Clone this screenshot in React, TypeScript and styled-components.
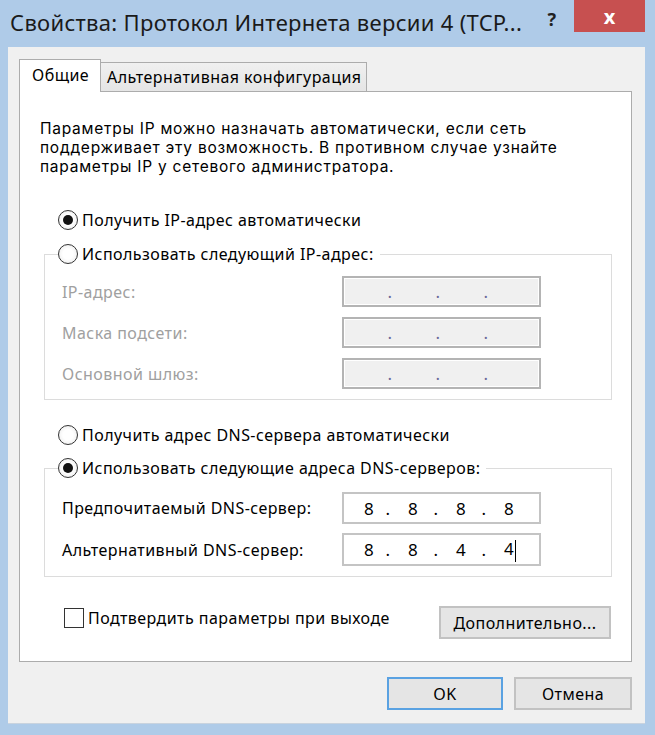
import styled, { createGlobalStyle, css } from 'styled-components';

const GlobalStyle = createGlobalStyle`
  body {
    margin: 0;
    font-family: 'Noto Sans', 'Liberation Sans', sans-serif;
    letter-spacing: 0.45px;
    color: #000;
  }
`;

const Window = styled.div`
  width: 655px;
  height: 735px;
  background: #afcbe8;
  display: flex;
  flex-direction: column;
  box-sizing: border-box;
`;

const TitleBar = styled.div`
  height: 47px;
  display: flex;
  align-items: flex-start;
  flex-shrink: 0;
`;

const Title = styled.div`
  flex: 1;
  padding: 9px 0 0 10px;
  font-size: 22px;
  line-height: 26px;
  letter-spacing: 0.3px;
  color: #1a1a1a;
  white-space: nowrap;
`;

const HelpButton = styled.div`
  width: 24px;
  margin-top: 9px;
  margin-right: 10px;
  font-size: 18px;
  font-weight: 700;
  line-height: 20px;
  color: #222;
  text-align: center;
`;

const CloseButton = styled.div`
  width: 71px;
  height: 32px;
  margin-right: 10px;
  background: #c75050;
  color: #fff;
  display: flex;
  align-items: center;
  justify-content: center;
  font-size: 20px;
  font-weight: 700;
  letter-spacing: 0;
`;

const Client = styled.div`
  flex: 1;
  margin: 0 10px 11px 8px;
  background: #f0f0f0;
  padding: 12px 13px 0 11px;
  display: flex;
  flex-direction: column;
  box-sizing: border-box;
  border-bottom: 1px solid #c9d3de;
`;

const Tabs = styled.div`
  display: flex;
  align-items: flex-end;
  height: 33px;
  margin-bottom: -1px;
  position: relative;
  z-index: 1;
`;

const Tab = styled.div<{ $active?: boolean }>`
  box-sizing: border-box;
  border: 1px solid #acacac;
  border-bottom: none;
  font-size: 16px;
  display: flex;
  align-items: center;
  ${({ $active }) =>
    $active
      ? css`
          height: 33px;
          background: #fff;
          padding: 0 11px 2px 12px;
        `
      : css`
          height: 29px;
          margin-bottom: 1px;
          margin-left: -1px;
          padding: 0 5px 0 6px;
          background: linear-gradient(#f0f0f0, #e5e5e5);
        `}
`;

const Panel = styled.div`
  height: 571px;
  box-sizing: border-box;
  background: #fff;
  border: 1px solid #acacac;
  padding: 27px 19px 0 20px;
  display: flex;
  flex-direction: column;
`;

const Intro = styled.div`
  display: flex;
  flex-direction: column;
  font-family: Inter, 'Noto Sans', sans-serif;
  font-size: 15.5px;
  letter-spacing: 0.75px;
`;

const IntroLine = styled.div`
  height: 19px;
  line-height: 19px;
  white-space: nowrap;
`;

const RadioRow = styled.label<{ $mt: number; $ml?: number }>`
  display: flex;
  align-items: center;
  gap: 4px;
  height: 20px;
  margin: ${({ $mt }) => $mt}px 0 0 ${({ $ml }) => $ml ?? 18}px;
  font-size: 16px;
`;

const Radio = styled.span<{ $checked?: boolean }>`
  width: 20px;
  height: 20px;
  box-sizing: border-box;
  border: 1.5px solid #333;
  border-radius: 50%;
  background: radial-gradient(circle, #fff 40%, #e6e6e6 100%);
  display: flex;
  align-items: center;
  justify-content: center;
  flex-shrink: 0;

  &::after {
    content: '';
    width: 10px;
    height: 10px;
    border-radius: 50%;
    background: #111;
    display: ${({ $checked }) => ($checked ? 'block' : 'none')};
  }
`;

const GroupBox = styled.fieldset<{ $mt: number }>`
  margin: ${({ $mt }) => $mt}px 0 0 4px;
  padding: 0;
  border: 1px solid #dcdcdc;
  min-width: 0;
`;

const Legend = styled.legend`
  margin-left: 13px;
  padding: 0 6px 0 0;
`;

const Fields = styled.div<{ $pt: number; $gap: number }>`
  display: flex;
  flex-direction: column;
  gap: ${({ $gap }) => $gap}px;
  padding: ${({ $pt }) => $pt}px 70px 10px 17px;
`;

const FieldRow = styled.div`
  display: flex;
  align-items: center;
  justify-content: space-between;
`;

const FieldLabel = styled.span<{ $disabled?: boolean }>`
  font-size: 16px;
  color: ${({ $disabled }) => ($disabled ? '#a0a0a0' : '#000')};
`;

const IpBox = styled.div<{ $disabled?: boolean; $h: number }>`
  width: 199px;
  height: ${({ $h }) => $h}px;
  box-sizing: border-box;
  border: 2px solid ${({ $disabled }) => ($disabled ? '#b4b4b4' : '#c4c4c4')};
  background: ${({ $disabled }) => ($disabled ? '#f0f0f0' : '#fff')};
  box-shadow: inset 0 0 0 1px #fff;
  display: grid;
  grid-template-columns: 44px 48px 48px 48px;
  align-items: center;
  padding-left: 4px;
  font-size: 17px;
  letter-spacing: 0;
`;

const Octet = styled.span<{ $disabled?: boolean }>`
  display: flex;
  align-items: center;
  justify-content: space-between;
  padding-left: 16px;
  padding-right: ${({ $disabled }) => ($disabled ? 0 : 2)}px;
`;

const Dot = styled.span<{ $disabled?: boolean }>`
  color: ${({ $disabled }) => ($disabled ? '#6a6a9a' : '#000')};
`;

const Caret = styled.span`
  display: inline-block;
  width: 1px;
  height: 22px;
  background: #000;
  margin-left: 1px;
  vertical-align: middle;
`;

const BottomRow = styled.div`
  display: flex;
  justify-content: space-between;
  align-items: flex-start;
  margin: 29px 1px 0 24px;
`;

const CheckLabel = styled.label`
  display: flex;
  align-items: center;
  gap: 4px;
  margin-top: 1px;
  font-size: 16px;
`;

const CheckBox = styled.span`
  width: 20px;
  height: 20px;
  box-sizing: border-box;
  border: 1.5px solid #333;
  background: #fff;
`;

const Button = styled.div<{ $w: number; $default?: boolean }>`
  width: ${({ $w }) => $w}px;
  height: 33px;
  box-sizing: border-box;
  border: ${({ $default }) => ($default ? '2px solid #5aa2e2' : '2px solid #c2c2c2')};
  background: #e5e5e5;
  display: flex;
  align-items: center;
  justify-content: center;
  font-size: 16px;
`;

const Footer = styled.div`
  display: flex;
  justify-content: flex-end;
  gap: 11px;
  padding-top: 15px;
`;

function IpField({ values, disabled, h, caret }: { values?: string[]; disabled?: boolean; h: number; caret?: boolean }) {
  const v = values ?? ['', '', '', ''];
  return (
    <IpBox $disabled={disabled} $h={h}>
      {v.map((x, i) => (
        <Octet key={i} $disabled={disabled}>
          <span>
            {x}
            {caret && i === 3 ? <Caret /> : null}
          </span>
          {i < 3 ? <Dot $disabled={disabled}>.</Dot> : null}
        </Octet>
      ))}
    </IpBox>
  );
}

export default function App() {
  return (
    <>
      <GlobalStyle />
      <Window>
        <TitleBar>
          <Title>Свойства: Протокол Интернета версии 4 (TCP...</Title>
          <HelpButton>?</HelpButton>
          <CloseButton>x</CloseButton>
        </TitleBar>

        <Client>
          <Tabs>
            <Tab $active>Общие</Tab>
            <Tab>Альтернативная конфигурация</Tab>
          </Tabs>

          <Panel>
            <Intro>
              <IntroLine>Параметры IP можно назначать автоматически, если сеть</IntroLine>
              <IntroLine>поддерживает эту возможность. В противном случае узнайте</IntroLine>
              <IntroLine>параметры IP у сетевого администратора.</IntroLine>
            </Intro>

            <RadioRow $mt={34}>
              <Radio $checked />
              Получить IP-адрес автоматически
            </RadioRow>

            {/* Static IP group, disabled */}
            <GroupBox $mt={14}>
              <Legend>
                <RadioRow as="span" $mt={0} $ml={0}>
                  <Radio />
                  Использовать следующий IP-адрес:
                </RadioRow>
              </Legend>
              <Fields $pt={12} $gap={10}>
                <FieldRow>
                  <FieldLabel $disabled>IP-адрес:</FieldLabel>
                  <IpField disabled h={31} />
                </FieldRow>
                <FieldRow>
                  <FieldLabel $disabled>Маска подсети:</FieldLabel>
                  <IpField disabled h={31} />
                </FieldRow>
                <FieldRow>
                  <FieldLabel $disabled>Основной шлюз:</FieldLabel>
                  <IpField disabled h={31} />
                </FieldRow>
              </Fields>
            </GroupBox>

            <RadioRow $mt={25}>
              <Radio />
              Получить адрес DNS-сервера автоматически
            </RadioRow>

            {/* DNS group */}
            <GroupBox $mt={13}>
              <Legend>
                <RadioRow as="span" $mt={0} $ml={0}>
                  <Radio $checked />
                  Использовать следующие адреса DNS-серверов:
                </RadioRow>
              </Legend>
              <Fields $pt={14} $gap={9}>
                <FieldRow>
                  <FieldLabel>Предпочитаемый DNS-сервер:</FieldLabel>
                  <IpField values={['8', '8', '8', '8']} h={32} />
                </FieldRow>
                <FieldRow>
                  <FieldLabel>Альтернативный DNS-сервер:</FieldLabel>
                  <IpField values={['8', '8', '4', '4']} h={33} caret />
                </FieldRow>
              </Fields>
            </GroupBox>

            <BottomRow>
              <CheckLabel>
                <CheckBox />
                Подтвердить параметры при выходе
              </CheckLabel>
              <Button $w={172}>Дополнительно...</Button>
            </BottomRow>
          </Panel>

          <Footer>
            <Button $w={116} $default>
              OK
            </Button>
            <Button $w={118}>Отмена</Button>
          </Footer>
        </Client>
      </Window>
    </>
  );
}
